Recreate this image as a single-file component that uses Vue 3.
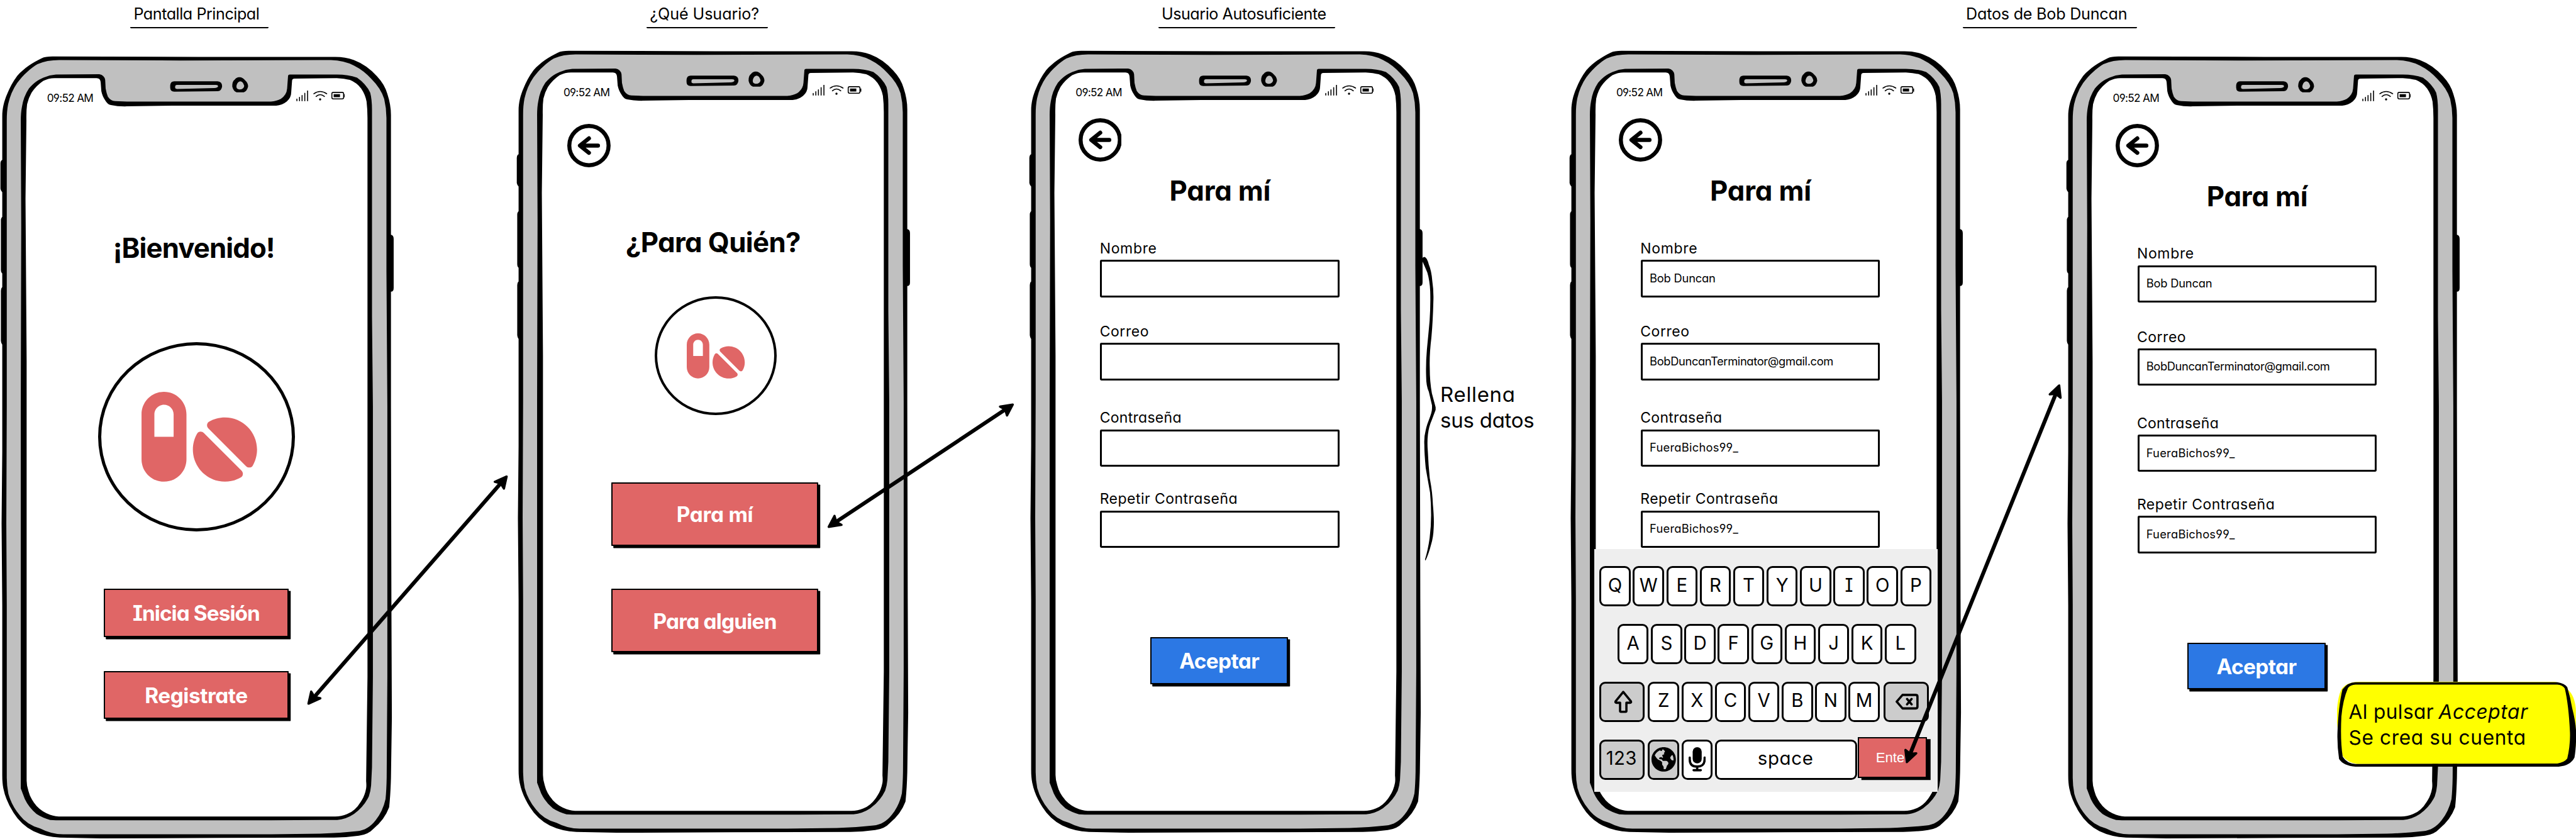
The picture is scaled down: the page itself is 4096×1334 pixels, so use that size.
<script setup>
const UNIT = 4096 / 5706

// Spreads the letters of an element so that its text spans the given board width.
const vFit = {
  mounted(el, { value }) {
    const size = parseFloat(getComputedStyle(el).fontSize)
    const natural = el.getBoundingClientRect().width
    const count = el.textContent.trim().length - 1
    const spacing = (value * UNIT + 0.12 * size - natural) / count
    el.style.letterSpacing = `${(spacing / size).toFixed(4)}em`
  }
}

const headings = [
  { text: 'Pantalla Principal', fit: 275, cls: 'h-main' },
  { text: '¿Qué Usuario?', fit: 238, cls: 'h-who' },
  { text: 'Usuario Autosuficiente', fit: 361, cls: 'h-self' },
  { text: 'Datos de Bob Duncan', fit: 353, cls: 'h-data' }
]

const fields = (values) => [
  { label: 'Nombre', fit: 122, value: values[0], vfit: 143 },
  { label: 'Correo', fit: 104.5, value: values[1], vfit: 404 },
  { label: 'Contraseña', fit: 177, value: values[2], vfit: 193 },
  { label: 'Repetir Contraseña', fit: 301, value: values[2], vfit: 193 }
]
const filled = ['Bob Duncan', 'BobDuncanTerminator@gmail.com', 'FueraBichos99_']

const phones = [
  { id: 'welcome', cls: 'p1', title: '¡Bienvenido!', fit: 352, logo: true, buttons: [['Inicia Sesión', 277], ['Registrate', 223]] },
  { id: 'who', cls: 'p2', back: true, title: '¿Para Quién?', fit: 381, logo: true, buttons: [['Para mí', 164], ['Para alguien', 269]] },
  { id: 'empty', cls: 'p3', back: true, title: 'Para mí', fit: 217, form: fields([]), buttons: [['Aceptar', 172]] },
  { id: 'typing', cls: 'p4', back: true, title: 'Para mí', fit: 217, form: fields(filled), keyboard: true },
  { id: 'done', cls: 'p5', back: true, title: 'Para mí', fit: 217, form: fields(filled), buttons: [['Aceptar', 172]] }
]

const keyRows = ['QWERTYUIOP', 'ASDFGHJKL']

const arrows = [
  [682, 1560, 1123.5, 1054],
  [1834, 1168, 2245, 895],
  [4223, 1690, 4562, 852]
].map(([x1, y1, x2, y2]) => {
  const a = Math.atan2(y2 - y1, x2 - x1)
  const dx = Math.cos(a) * 16
  const dy = Math.sin(a) * 16
  const deg = (a * 180) / Math.PI
  return {
    line: { x1: x1 + dx, y1: y1 + dy, x2: x2 - dx, y2: y2 - dy },
    heads: [
      `translate(${x2} ${y2}) rotate(${deg})`,
      `translate(${x1} ${y1}) rotate(${deg + 180})`
    ]
  }
})
</script>

<template>
  <main class="board">
    <header class="headings">
      <div v-for="h in headings" :key="h.text" class="heading" :class="h.cls">
        <span v-fit="h.fit" class="t">{{ h.text }}</span>
      </div>
    </header>

    <section class="phones">
      <article v-for="p in phones" :key="p.id" class="phone" :class="p.cls">
        <svg class="frame" viewBox="0 110 872 1748">
          <path d="M10 353Q1 353 1 362V418Q3 427 10 427ZM10 479Q2 479 2 488V598Q2 607 10 607ZM10 635Q2 635 2 644V755Q3 765 10 765ZM860 520H866Q872 521 872 529V638Q872 646 866 646H860Z" />
          <path d="M5 258C5 240 9 224 16 208Q24 187 38 168C54 150 72 139 92 129Q101 125 116 125L440 126H743C758 126 771 128 784 133Q813 144 835 169Q852 187 858 208Q866 232 866 255V900L867 1340L868 1590L866 1723Q865 1760 862 1788Q852 1815 828 1835Q815 1849 795 1851Q768 1855 740 1855L480 1856L222 1857L133 1855Q101 1854 74 1841Q46 1826 30 1800Q13 1774 7.400 1746Q5 1735 5 1717V1340L3.500 1160L5 1000Z" />
          <path class="metal" d="M15 267C15 253 16 242 18 231Q24 204 38 184C52 165 68 151 83 142Q104 133 131 133L400 134L733 133Q762 134 784 145Q806 156 823 175Q844 196 851 219Q856 240 856 261V600L858 900V1500L856.500 1723Q856 1750 854 1770Q848 1797 832 1817Q815 1839 791 1841Q755 1845 710 1846.500L600 1848H140Q114 1848 89 1835Q60 1827 44 1806Q26 1785 18.500 1758Q15 1740 15 1723V1340L14 1160L15 900Z" />
          <path d="M46 267Q46 250 48.500 237Q52 214 64 196C74 184 84 177 96 172Q110 166 124 165L220 164.300Q231 166 233 177L234 196Q236 207 239 214Q245 223 255 224L281 225H600Q613 224 622 219Q635 210 636 196L638 169Q638 165 642 165H746Q771 165 791 172Q811 186 820 205Q824 220 824 243V700L826 900V1500L824 1700L822 1740Q821 1752 817 1764Q806 1787 784 1803Q766 1815 747 1816L600 1817H137Q124 1817 111 1816Q95 1812 81 1803Q64 1789 55 1770L46 1746V900L47 500Z" />
          <path class="glass" d="M58.500 267Q58 246 60 231Q63 217 70 205Q81 189 96 179Q108 173 121 173H214Q222 173 223 182L224.500 202Q227 214 233 222Q238 231 245.500 232.500Q262 236 281 235.500L383 234H612Q625 233 635 225Q645 216 645 205L647 178Q648 174 652 174L746 173Q763 174 775 177Q790 183 800 196Q809 209 812 225Q814 242 814 261V1500L811 1730Q812 1740 811 1746Q808 1763 799 1776Q787 1796 769 1803Q755 1809 740 1808.500H140Q124 1809 111 1804.500Q93 1798 81 1785Q67 1769 63 1752Q59 1740 59 1729V800L56.500 440Z" />
          <path fill-rule="evenodd" d="M386 180H482Q492 181 492 191Q491 201 482 202L386 203Q377 203 377 194V189Q378 180 386 180ZM392 188Q388 188 388 192Q387 197 392 197L474 195Q483 194 483 191Q483 188 478 188ZM531 171Q537 171 543 178Q550 184 549.500 192Q547 202 540 204.500H524Q517 202 514.500 192Q514 180 520 176Q525 170 531 171ZM532 180Q526 181 524 189Q522 197 530 198Q540 198 541 190Q538 180 532 180Z" />
        </svg>

        <div class="screen">
          <div class="status">
            <span v-fit="100.500" class="t">09:52 AM</span>
            <svg class="signals" viewBox="656 200 108 30">
              <path class="thin" d="M657.500 219V222.500M663.300 215V222.500M669 211V222.500M675 206V222.500M681.200 200.500V222.500" />
              <path class="thin" d="M695 207Q709 197 723.500 207M700 213Q709 205 718.500 213" />
              <circle cx="709" cy="219.500" r="2.400" />
              <rect class="thin" x="735" y="204" width="26" height="14.500" rx="3" />
              <path d="M739 208H753V214.500H739ZM762 208H764V215H762Z" />
            </svg>
          </div>

          <svg v-if="p.back" class="back" viewBox="0 0 96 96">
            <circle cx="48" cy="48" r="43.500" />
            <path d="M68 48H29M48 32L28 48L48 64" />
          </svg>

          <h2 class="title"><span v-fit="p.fit" class="t">{{ p.title }}</span></h2>

          <div v-if="p.logo" class="logo">
            <svg class="pills" viewBox="0 32 576 448">
              <path d="M112 96c-26.500 0-48 21.500-48 48V256h96V144c0-26.500-21.500-48-48-48zM0 144C0 82.100 50.100 32 112 32s112 50.100 112 112V368c0 61.900-50.100 112-112 112S0 429.900 0 368V144zM554.900 399.400c-7.100 12.300-23.700 13.100-33.800 3.100L333.500 214.900c-10-10-9.300-26.700 3.100-33.800C360 167.700 387.100 160 416 160c88.400 0 160 71.600 160 160c0 28.900-7.700 56-21.100 79.400zm-59.500 59.500C472 472.300 444.900 480 416 480c-88.400 0-160-71.600-160-160c0-28.900 7.700-56 21.100-79.400c7.100-12.300 23.700-13.100 33.800-3.100L498.500 425.100c10 10 9.300 26.700-3.100 33.800z" />
            </svg>
          </div>

          <form v-if="p.form" class="form">
            <div v-for="f in p.form" :key="f.label" class="field">
              <label><span v-fit="f.fit" class="t">{{ f.label }}</span></label>
              <div class="input"><span v-if="f.value" v-fit="f.vfit" class="t">{{ f.value }}</span></div>
            </div>
          </form>

          <div v-if="p.buttons" class="buttons">
            <button v-for="b in p.buttons" :key="b[0]" type="button" class="button">
              <span v-fit="b[1]" class="t">{{ b[0] }}</span>
            </button>
          </div>

          <div v-if="p.keyboard" class="keyboard">
            <div v-for="row in keyRows" :key="row" class="row">
              <kbd v-for="k in row" :key="k" class="key">{{ k }}</kbd>
            </div>
            <div class="row">
              <kbd class="key wide grey lead">
                <svg class="k-shift" viewBox="0 0 42 50"><path d="M21 3L38 24Q39 27 36 27H28V45Q28 47 26 47H16Q14 47 14 45V27H6Q3 27 4 24Z" /></svg>
              </kbd>
              <kbd v-for="k in 'ZXCVBNM'" :key="k" class="key">{{ k }}</kbd>
              <kbd class="key wide grey tail">
                <svg class="k-del" viewBox="0 0 54 38"><path d="M17 4H46Q50 4 50 8V30Q50 34 46 34H17L4 19ZM27 13L37 25M37 13L27 25" /></svg>
              </kbd>
            </div>
            <div class="row">
              <kbd class="key wide grey lead"><span v-fit="63" class="t">123</span></kbd>
              <kbd class="key grey">
                <svg class="k-globe" viewBox="0 8 496 496">
                  <path d="M248 8C111.030 8 0 119.030 0 256s111.030 248 248 248 248-111.030 248-248S384.970 8 248 8zm82.290 357.600c-3.900 3.880-7.990 7.950-11.310 11.280-2.990 3-5.100 6.700-6.170 10.710-1.510 5.660-2.730 11.380-4.770 16.870l-17.390 46.850c-13.760 3-28 4.690-42.650 4.690v-27.380c1.690-12.620-7.640-36.260-22.630-51.250-6-6-9.370-14.140-9.370-22.630v-32.010c0-11.640-6.270-22.340-16.460-27.970-14.370-7.950-34.810-19.060-48.810-26.110-11.480-5.780-22.100-13.140-31.650-21.750l-.8-.72a114.792 114.792 0 0 1-18.060-20.740c-9.380-13.770-24.660-36.420-34.590-51.140 20.470-45.500 57.360-82.040 103.200-101.890l24.010 12.010C203.480 89.740 216 82.010 216 70.110v-11.300c7.990-1.290 16.120-2.110 24.390-2.420l28.300 28.300c6.250 6.250 6.250 16.380 0 22.630L264 112l-10.340 10.340c-3.120 3.120-3.120 8.190 0 11.310l4.690 4.690c3.120 3.120 3.120 8.190 0 11.310l-8 8a8.008 8.008 0 0 1-5.660 2.340h-8.990c-2.080 0-4.080.81-5.580 2.270l-9.920 9.650a8.001 8.001 0 0 0-1.580 9.310l15.590 31.190c2.660 5.320-1.210 11.580-7.150 11.580h-5.640c-1.930 0-3.790-.7-5.240-1.960l-9.280-8.060a16.017 16.017 0 0 0-15.550-3.100l-31.170 10.390a11.950 11.950 0 0 0-8.170 11.340c0 4.530 2.560 8.660 6.610 10.690l11.080 5.540c9.410 4.710 19.790 7.160 30.310 7.160s22.590 27.290 32 32h66.750c8.490 0 16.620 3.370 22.630 9.370l13.690 13.690a30.503 30.503 0 0 1 8.930 21.570 46.536 46.536 0 0 1-13.720 32.980zM417 274.250c-5.790-1.450-10.840-5-14.150-9.970l-17.980-26.970a23.970 23.970 0 0 1 0-26.620l19.590-29.380c2.320-3.470 5.500-6.290 9.240-8.150l12.980-6.490C440.200 193.590 448 223.870 448 256c0 8.670-.74 17.160-1.820 25.540L417 274.250z" />
                </svg>
              </kbd>
              <kbd class="key">
                <svg class="k-mic" viewBox="0 0 38 54">
                  <rect x="9" y="0" width="20" height="36" rx="10" />
                  <path class="stroke" d="M2.500 23V27Q2.500 43 19 43T35.500 27V23M19 43V50M11 51H27" />
                </svg>
              </kbd>
              <kbd class="key space"><span v-fit="118" class="t">space</span></kbd>
              <kbd class="enter">Enter</kbd>
            </div>
          </div>
        </div>
      </article>
    </section>

    <svg class="overlay" viewBox="0 0 5706 1858">
      <g v-for="(a, i) in arrows" :key="i" class="arrow">
        <line v-bind="a.line" />
        <path v-for="t in a.heads" :key="t" :transform="t" d="M-2 0L-28 -12L-22 0L-26 13Z" />
      </g>
      <path d="M3150 577Q3149 570 3155 569Q3161 570 3165 586Q3171 600 3172.700 623Q3176 645 3175 668Q3174 710 3170.700 747Q3166 785 3167 815Q3167 845 3171.700 871L3180 902V908L3171.700 930Q3165 945 3163 962Q3161 980 3162.700 999Q3164 1030 3167 1059Q3173 1090 3174 1118Q3177 1150 3175.700 1169Q3175 1190 3170 1206Q3165 1226 3157.500 1242L3156.500 1239Q3163 1218 3166.700 1192Q3170 1165 3170 1141Q3170 1115 3167.700 1091Q3162 1060 3158 1036Q3155 1005 3155 985Q3154 968 3158 953C3162 933 3172 918 3172 904V898L3165 868Q3159 855 3159 834Q3158 805 3160.700 774Q3164 740 3166.700 710Q3169 675 3168 645Q3167 622 3161.700 604Q3156 590 3150 577Z" />
    </svg>

    <p class="remark">
      <span v-fit="160" class="t">Rellena</span>
      <span v-fit="203" class="t">sus datos</span>
    </p>

    <aside class="note">
      <svg class="note-box" viewBox="0 0 530 188">
        <path class="yellow" d="M50 0H480Q505 2 512 18Q526 30 529 60V140Q526 175 495 182H45Q25 180 13 165L5 140L0 90V60Q4 20 14 12Q25 0 50 0Z" />
        <path fill-rule="evenodd" d="M41 1H488Q505 4 510 12Q517 35 521 59Q529 90 529.600 112Q530 145 526 168Q517 186 491 188H41Q14 186 4.500 171Q0 140 1 112Q3 55 12 17Q24 1 41 1ZM41 6.400Q30 7 24.400 13.500Q13 40 9.700 77Q7 130 12.600 166Q22 181 41 182L488 181Q503 179 510 170Q517 140 516 112Q513 50 504.500 14.700Q499 7 488 6.400Z" />
      </svg>
      <div class="note-text">
        <div class="note-line"><span v-fit="183" class="t">Al pulsar</span> <em v-fit="192" class="t">Acceptar</em></div>
        <div class="note-line"><span v-fit="387" class="t">Se crea su cuenta</span></div>
      </div>
    </aside>
  </main>
</template>

<style>
/* 1rem equals 100 board units; the board is 5706 units wide. */
html {
  font-size: 71.7841px;
}
body {
  margin: 0;
  background: #fff;
}
</style>

<style scoped>
.board {
  position: relative;
  width: 57.06rem;
  height: 18.58rem;
  overflow: hidden;
  background: #fff;
  color: #000;
  font-family: Inter, 'Open Sans', sans-serif;
  font-feature-settings: 'cv11' 1, 'cv04' 1, 'cv08' 1;
}
.t {
  display: block;
  width: max-content;
  margin: 0.05em 0 -0.05em -0.06em;
  white-space: nowrap;
}
svg {
  display: block;
}

/* Headings */
.headings {
  display: flex;
  height: 0.98rem;
  align-items: flex-start;
}
.heading {
  box-sizing: border-box;
  display: flex;
  align-items: flex-start;
  height: 0.63rem;
  padding: 0.078rem 0 0 0.09rem;
  border-bottom: 0.04rem solid #000;
  border-radius: 0.02rem;
  font-size: 0.35rem;
  line-height: 0.44rem;
}
.h-main { width: 3.06rem; margin-left: 2.89rem; }
.h-who { width: 2.69rem; margin-left: 8.375rem; }
.h-self { width: 3.92rem; margin-left: 8.645rem; }
.h-data { width: 3.85rem; margin-left: 13.9rem; }

/* Phones */
.phones {
  display: flex;
  align-items: flex-start;
}
.phone {
  position: relative;
  flex: none;
  width: 8.72rem;
  height: 17.48rem;
}
.p1 { margin-top: 0.12rem; }
.p2 { margin-left: 2.72rem; }
.p3 { margin-left: 2.625rem; }
.p4 { margin-left: 3.255rem; }
.p5 { margin: 0.12rem 0 0 2.28rem; }
.frame {
  position: absolute;
  inset: 0;
  width: 100%;
  height: 100%;
}
.metal { fill: #c0c0c0; }
.glass { fill: #fff; }
.screen {
  position: relative;
  display: flex;
  flex-direction: column;
  align-items: flex-start;
  padding-top: 0.81rem;
}
.status {
  box-sizing: border-box;
  display: flex;
  align-items: center;
  justify-content: space-between;
  width: 100%;
  height: 0.48rem;
  padding: 0 1.08rem 0 1.055rem;
  font-size: 0.24rem;
}
.signals {
  width: 1.08rem;
  height: 0.3rem;
}
.thin {
  fill: none;
  stroke: #000;
  stroke-width: 2.2;
  stroke-linecap: round;
}
.back {
  width: 0.96rem;
  height: 0.96rem;
  margin: 0.35rem 0 0 1.1rem;
  fill: none;
  stroke: #000;
  stroke-width: 9;
  stroke-linecap: round;
  stroke-linejoin: round;
}
.p2 .back { margin: 0.47rem 0 0 1.12rem; }
.title {
  display: flex;
  margin: 0.225rem 0 0 3.155rem;
  font-size: 0.61rem;
  line-height: 0.8rem;
  font-weight: 700;
}
.p1 .title { margin: 2.68rem 0 0 2.54rem; }
.p2 .title { margin: 1.25rem 0 0 2.455rem; }

.logo {
  box-sizing: border-box;
  display: flex;
  align-items: center;
  justify-content: center;
  border: 0.075rem solid #000;
  border-radius: 50%;
}
.pills { fill: #e06666; }
.p1 .logo { width: 4.36rem; height: 4.19rem; margin: 1.71rem 0 0 2.18rem; }
.p1 .pills { width: 2.56rem; height: 1.99rem; margin-left: 0.11rem; }
.p2 .logo { width: 2.7rem; height: 2.64rem; margin: 0.81rem 0 0 3.06rem; border-width: 0.06rem; }
.p2 .pills { width: 1.285rem; height: 1rem; margin-left: 0.02rem; }

/* Buttons */
.buttons {
  display: flex;
  flex-direction: column;
}
.button {
  box-sizing: border-box;
  display: flex;
  align-items: center;
  justify-content: center;
  padding: 0 0 0 0.03rem;
  border: 0.04rem solid #000;
  border-radius: 0.01rem;
  box-shadow: 0.045rem 0.05rem 0 #000;
  background: #e06666;
  color: #fff;
  font: 700 0.465rem/1 Inter, sans-serif;
  font-feature-settings: inherit;
}
.p1 .buttons { gap: 0.75rem; margin: 1.27rem 0 0 2.3rem; }
.p1 .button { width: 4.09rem; height: 1.07rem; }
.p2 .buttons { gap: 0.95rem; margin: 1.48rem 0 0 2.097rem; }
.p2 .button { width: 4.59rem; height: 1.41rem; }
.p3 .buttons,
.p5 .buttons { margin: 1.98rem 0 0 2.695rem; }
.p3 .button,
.p5 .button { width: 3.055rem; height: 1.04rem; background: #2c78e4; }

/* Form */
.form {
  display: flex;
  flex-direction: column;
  margin: 0.685rem 0 0 1.585rem;
}
.field { width: 5.3rem; }
.field + .field { margin-top: 0.545rem; }
.field:nth-child(3) { margin-top: 0.615rem; }
.field:nth-child(4) { margin-top: 0.505rem; }
.field label {
  display: flex;
  padding-left: 0.01rem;
  font-size: 0.32rem;
  line-height: 0.4rem;
}
.input {
  box-sizing: border-box;
  display: flex;
  align-items: center;
  height: 0.825rem;
  margin-top: 0.07rem;
  padding: 0 0 0.06rem 0.17rem;
  border: 0.042rem solid #000;
  border-top-width: 0.05rem;
  border-radius: 0.03rem;
  background: #fff;
  font-size: 0.255rem;
}

/* Keyboard */
.keyboard {
  box-sizing: border-box;
  display: flex;
  flex-direction: column;
  gap: 0.385rem;
  width: 7.606rem;
  height: 5.38rem;
  margin: 0.025rem 0 0 0.56rem;
  padding: 0.38rem 0 0 0.11rem;
  background: #eee;
}
.row {
  display: flex;
  gap: 0.0505rem;
  height: 0.895rem;
}
.row:nth-child(2) { margin-left: 0.4rem; }
.key {
  box-sizing: border-box;
  display: flex;
  align-items: center;
  justify-content: center;
  flex: none;
  width: 0.69rem;
  padding-bottom: 0.05rem;
  border: 0.045rem solid #000;
  border-radius: 0.13rem;
  background: #fff;
  font: 400 0.41rem/1 Inter, sans-serif;
  font-feature-settings: inherit;
}
.key .t {
  margin-top: 0;
  margin-bottom: 0;
}
.grey { background: #ccc; }
.wide { width: 1rem; }
.lead { margin-right: 0.025rem; }
.tail { margin-left: 0.035rem; }
.space { width: 3.157rem; }
.k-shift,
.k-del {
  fill: none;
  stroke: #000;
  stroke-width: 5;
  stroke-linecap: round;
  stroke-linejoin: round;
}
.k-shift { width: 0.42rem; height: 0.5rem; margin: 0.05rem 0 0 0.04rem; }
.k-del { width: 0.54rem; height: 0.38rem; margin: 0.05rem 0 0 0.05rem; }
.k-globe { width: 0.54rem; height: 0.54rem; margin: 0.05rem -0.1rem 0; flex: none; }
.k-mic { width: 0.38rem; height: 0.54rem; margin-top: 0.05rem; flex: none; }
.stroke {
  fill: none;
  stroke: #000;
  stroke-width: 5;
  stroke-linecap: round;
}
.enter {
  box-sizing: border-box;
  display: flex;
  align-items: center;
  justify-content: center;
  flex: none;
  width: 1.53rem;
  height: 0.9rem;
  margin: -0.045rem 0 0 -0.037rem;
  border: 0.04rem solid #000;
  box-shadow: 0.08rem 0.045rem 0 #000;
  background: #e06666;
  color: #fff;
  font: 400 0.31rem/1 'Liberation Sans', Arial, sans-serif;
}

/* Annotations */
.overlay {
  position: absolute;
  inset: 0;
  width: 100%;
  height: 100%;
}
.arrow {
  stroke: #000;
  stroke-linecap: round;
  stroke-linejoin: round;
}
.arrow line { stroke-width: 8.5; }
.arrow path { stroke-width: 5; }
.remark {
  position: absolute;
  left: 31.93rem;
  top: 8.44rem;
  display: flex;
  flex-direction: column;
  margin: 0;
  font-size: 0.46rem;
  line-height: 0.57rem;
}
.note {
  position: absolute;
  left: 51.76rem;
  top: 15.1rem;
  width: 5.3rem;
  height: 1.88rem;
}
.note-box {
  position: absolute;
  inset: 0;
  width: 100%;
  height: 100%;
}
.yellow { fill: #ff0; }
.note-text {
  position: relative;
  padding: 0.365rem 0 0 0.29rem;
  font-size: 0.44rem;
  line-height: 0.57rem;
}
.note-line {
  display: flex;
  gap: 0.13rem;
}
</style>
